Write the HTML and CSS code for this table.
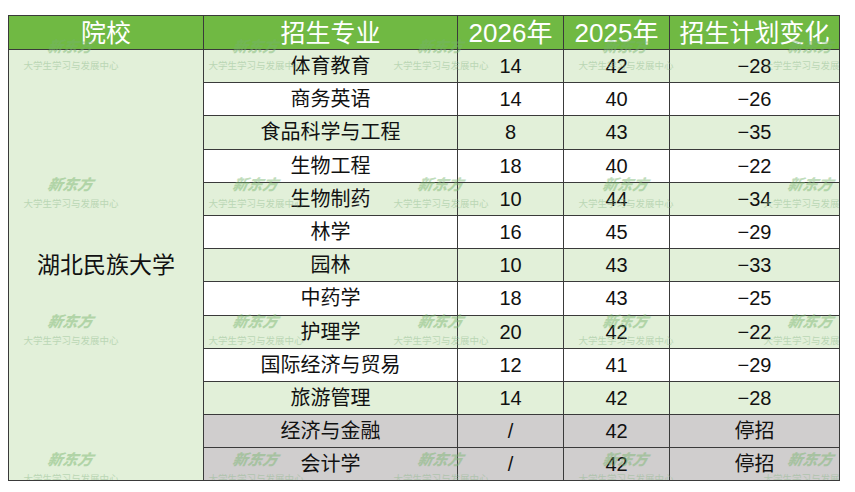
FILE: index.html
```html
<!DOCTYPE html>
<html lang="zh-CN">
<head>
<meta charset="utf-8">
<title>湖北民族大学 招生计划变化</title>
<link rel="stylesheet" href="styles.css">
</head>
<body>
<div class="wrap">
  <table class="plan">
    <colgroup>
      <col class="c-school"><col class="c-major"><col class="c-year"><col class="c-year"><col class="c-change">
    </colgroup>
    <thead>
      <tr><th>院校</th><th>招生专业</th><th class="num">2026年</th><th class="num">2025年</th><th>招生计划变化</th></tr>
    </thead>
    <tbody>
      <tr class="g"><td class="school" rowspan="13">湖北民族大学</td><td>体育教育</td><td>14</td><td>42</td><td>−28</td></tr>
      <tr class="w"><td>商务英语</td><td>14</td><td>40</td><td>−26</td></tr>
      <tr class="g"><td>食品科学与工程</td><td>8</td><td>43</td><td>−35</td></tr>
      <tr class="w"><td>生物工程</td><td>18</td><td>40</td><td>−22</td></tr>
      <tr class="g"><td>生物制药</td><td>10</td><td>44</td><td>−34</td></tr>
      <tr class="w"><td>林学</td><td>16</td><td>45</td><td>−29</td></tr>
      <tr class="g"><td>园林</td><td>10</td><td>43</td><td>−33</td></tr>
      <tr class="w"><td>中药学</td><td>18</td><td>43</td><td>−25</td></tr>
      <tr class="g"><td>护理学</td><td>20</td><td>42</td><td>−22</td></tr>
      <tr class="w"><td>国际经济与贸易</td><td>12</td><td>41</td><td>−29</td></tr>
      <tr class="g"><td>旅游管理</td><td>14</td><td>42</td><td>−28</td></tr>
      <tr class="s"><td>经济与金融</td><td>/</td><td>42</td><td>停招</td></tr>
      <tr class="s"><td>会计学</td><td>/</td><td>42</td><td>停招</td></tr>
    </tbody>
  </table>
  <div class="marks" aria-hidden="true">
    <div class="mark"><span class="logo">新东方</span><span class="sub">大学生学习与发展中心</span></div>
    <div class="mark"><span class="logo">新东方</span><span class="sub">大学生学习与发展中心</span></div>
    <div class="mark"><span class="logo">新东方</span><span class="sub">大学生学习与发展中心</span></div>
    <div class="mark"><span class="logo">新东方</span><span class="sub">大学生学习与发展中心</span></div>
    <div class="mark"><span class="logo">新东方</span><span class="sub">大学生学习与发展中心</span></div>
    <div class="mark"><span class="logo">新东方</span><span class="sub">大学生学习与发展中心</span></div>
    <div class="mark"><span class="logo">新东方</span><span class="sub">大学生学习与发展中心</span></div>
    <div class="mark"><span class="logo">新东方</span><span class="sub">大学生学习与发展中心</span></div>
    <div class="mark"><span class="logo">新东方</span><span class="sub">大学生学习与发展中心</span></div>
    <div class="mark"><span class="logo">新东方</span><span class="sub">大学生学习与发展中心</span></div>
    <div class="mark"><span class="logo">新东方</span><span class="sub">大学生学习与发展中心</span></div>
    <div class="mark"><span class="logo">新东方</span><span class="sub">大学生学习与发展中心</span></div>
    <div class="mark"><span class="logo">新东方</span><span class="sub">大学生学习与发展中心</span></div>
    <div class="mark"><span class="logo">新东方</span><span class="sub">大学生学习与发展中心</span></div>
    <div class="mark"><span class="logo">新东方</span><span class="sub">大学生学习与发展中心</span></div>
    <div class="mark"><span class="logo">新东方</span><span class="sub">大学生学习与发展中心</span></div>
    <div class="mark"><span class="logo">新东方</span><span class="sub">大学生学习与发展中心</span></div>
    <div class="mark"><span class="logo">新东方</span><span class="sub">大学生学习与发展中心</span></div>
    <div class="mark"><span class="logo">新东方</span><span class="sub">大学生学习与发展中心</span></div>
    <div class="mark"><span class="logo">新东方</span><span class="sub">大学生学习与发展中心</span></div>
  </div>
</div>
</body>
</html>
```
FILE: styles.css
```css
html, body {
  margin: 0;
  padding: 0;
  background: #ffffff;
}
body {
  font-family: "Liberation Sans", "Noto Sans CJK SC", sans-serif;
  color: #111;
}
.wrap {
  position: relative;
  width: 831px;
  margin: 15px 0 0 8px;
}
.plan {
  width: 831px;
  border-collapse: collapse;
  table-layout: fixed;
  border: 1px solid #3a3a3a;
}
.c-school { width: 195px; }
.c-major { width: 254px; }
.c-year { width: 106px; }
.c-change { width: 170px; }
.plan th {
  background: #70b943;
  color: #ffffff;
  font-weight: normal;
  font-size: 25px;
  height: 33px;
  padding: 0;
  line-height: 30px;
  border: 1px solid #3a3a3a;
  text-align: center;
}
.plan th.num {
  font-size: 26px;
}
.plan td {
  font-size: 20px;
  height: 32.2px;
  padding: 0;
  line-height: 28px;
  text-align: center;
  border: 1px solid #3a3a3a;
}
.plan td.school {
  background: #e2f0d9;
  font-size: 23px;
  border-right: 1px solid #3a3a3a;
}
.g td { background: #e2f0d9; }
.w td { background: #ffffff; }
.s td { background: #d0cece; }
.marks {
  position: absolute;
  left: 0;
  top: 0;
  width: 831px;
  height: 465px;
  overflow: hidden;
  pointer-events: none;
  display: grid;
  grid-template-columns: repeat(5, 96px);
  grid-auto-rows: 120px;
  column-gap: 89px;
  row-gap: 17.5px;
  padding: 22px 0 0 15px;
  box-sizing: border-box;
}
.mark {
  display: flex;
  flex-direction: column;
  align-items: center;
  gap: 4px;
  opacity: 0.45;
}
.logo {
  font-family: "Noto Sans CJK SC", sans-serif;
  font-weight: 900;
  font-style: italic;
  font-size: 15px;
  line-height: 18px;
  color: #76b46c;
  transform: skewX(-12deg);
}
.sub {
  font-family: "Noto Sans CJK SC", sans-serif;
  font-size: 9.5px;
  line-height: 12px;
  color: #8bb889;
  white-space: nowrap;
}
```
